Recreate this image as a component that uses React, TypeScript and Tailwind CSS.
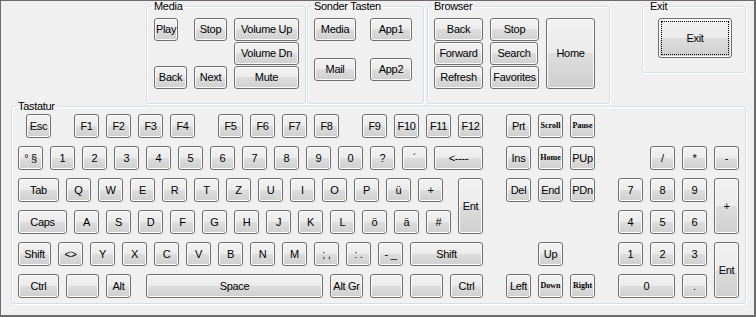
import clsx from 'clsx'
import type { ReactNode } from 'react'

const btnBase =
  'flex items-center justify-center overflow-hidden whitespace-nowrap rounded-[3px] border border-[#707070] bg-[linear-gradient(#f2f2f2,#ebebeb_50%,#dddddd_50%,#cfcfcf)] shadow-[inset_0_0_0_1px_#fbfbfb] text-black leading-none'

function Btn({ children, className, small }: { children?: ReactNode; className?: string; small?: boolean }) {
  return (
    <button
      className={clsx(
        btnBase,
        small ? "font-['Liberation_Serif',serif] text-[8px] font-bold" : 'tracking-[-0.3px]',
        className
      )}
    >
      {children}
    </button>
  )
}

function GroupBox({ title, className, children }: { title: string; className?: string; children?: ReactNode }) {
  return (
    <fieldset
      className={clsx(
        'shrink-0 rounded-[3px] border border-[#d5dfe5] shadow-[inset_1px_1px_0_#fff,1px_1px_0_#fff]',
        className
      )}
    >
      <legend className="-ml-[2px] px-[2px] text-[11px] leading-[11px] tracking-[-0.3px]">{title}</legend>
      {children}
    </fieldset>
  )
}

type KeyDef = [string, string, boolean?]

// grid: 1px columns with 7px gap -> every column is 8px apart, starting at x=18
const keys: KeyDef[] = [
  // row 1
  ['Esc', 'row-start-1 col-start-2 col-span-4'],
  ['F1', 'row-start-1 col-start-8 col-span-4'],
  ['F2', 'row-start-1 col-start-12 col-span-4'],
  ['F3', 'row-start-1 col-start-16 col-span-4'],
  ['F4', 'row-start-1 col-start-20 col-span-4'],
  ['F5', 'row-start-1 col-start-26 col-span-4'],
  ['F6', 'row-start-1 col-start-30 col-span-4'],
  ['F7', 'row-start-1 col-start-34 col-span-4'],
  ['F8', 'row-start-1 col-start-38 col-span-4'],
  ['F9', 'row-start-1 col-start-44 col-span-4'],
  ['F10', 'row-start-1 col-start-48 col-span-4'],
  ['F11', 'row-start-1 col-start-52 col-span-4'],
  ['F12', 'row-start-1 col-start-56 col-span-4'],
  ['Prt', 'row-start-1 col-start-62 col-span-4'],
  ['Scroll', 'row-start-1 col-start-66 col-span-4', true],
  ['Pause', 'row-start-1 col-start-70 col-span-4', true],
  // row 2
  ['° §', 'row-start-2 col-start-1 col-span-4'],
  ['1', 'row-start-2 col-start-5 col-span-4'],
  ['2', 'row-start-2 col-start-9 col-span-4'],
  ['3', 'row-start-2 col-start-13 col-span-4'],
  ['4', 'row-start-2 col-start-17 col-span-4'],
  ['5', 'row-start-2 col-start-21 col-span-4'],
  ['6', 'row-start-2 col-start-25 col-span-4'],
  ['7', 'row-start-2 col-start-29 col-span-4'],
  ['8', 'row-start-2 col-start-33 col-span-4'],
  ['9', 'row-start-2 col-start-37 col-span-4'],
  ['0', 'row-start-2 col-start-41 col-span-4'],
  ['?', 'row-start-2 col-start-45 col-span-4'],
  ['´', 'row-start-2 col-start-49 col-span-4'],
  ['<----', 'row-start-2 col-start-53 col-span-7'],
  ['Ins', 'row-start-2 col-start-62 col-span-4'],
  ['Home', 'row-start-2 col-start-66 col-span-4', true],
  ['PUp', 'row-start-2 col-start-70 col-span-4'],
  ['/', 'row-start-2 col-start-80 col-span-4'],
  ['*', 'row-start-2 col-start-84 col-span-4'],
  ['-', 'row-start-2 col-start-88 col-span-4'],
  // row 3
  ['Tab', 'row-start-3 col-start-1 col-span-6'],
  ['Q', 'row-start-3 col-start-7 col-span-4'],
  ['W', 'row-start-3 col-start-11 col-span-4'],
  ['E', 'row-start-3 col-start-15 col-span-4'],
  ['R', 'row-start-3 col-start-19 col-span-4'],
  ['T', 'row-start-3 col-start-23 col-span-4'],
  ['Z', 'row-start-3 col-start-27 col-span-4'],
  ['U', 'row-start-3 col-start-31 col-span-4'],
  ['I', 'row-start-3 col-start-35 col-span-4'],
  ['O', 'row-start-3 col-start-39 col-span-4'],
  ['P', 'row-start-3 col-start-43 col-span-4'],
  ['ü', 'row-start-3 col-start-47 col-span-4'],
  ['+', 'row-start-3 col-start-51 col-span-4'],
  ['Ent', 'row-start-3 row-span-2 col-start-56 col-span-4'],
  ['Del', 'row-start-3 col-start-62 col-span-4'],
  ['End', 'row-start-3 col-start-66 col-span-4'],
  ['PDn', 'row-start-3 col-start-70 col-span-4'],
  ['7', 'row-start-3 col-start-76 col-span-4'],
  ['8', 'row-start-3 col-start-80 col-span-4'],
  ['9', 'row-start-3 col-start-84 col-span-4'],
  ['+', 'row-start-3 row-span-2 col-start-88 col-span-4'],
  // row 4
  ['Caps', 'row-start-4 col-start-1 col-span-7'],
  ['A', 'row-start-4 col-start-8 col-span-4'],
  ['S', 'row-start-4 col-start-12 col-span-4'],
  ['D', 'row-start-4 col-start-16 col-span-4'],
  ['F', 'row-start-4 col-start-20 col-span-4'],
  ['G', 'row-start-4 col-start-24 col-span-4'],
  ['H', 'row-start-4 col-start-28 col-span-4'],
  ['J', 'row-start-4 col-start-32 col-span-4'],
  ['K', 'row-start-4 col-start-36 col-span-4'],
  ['L', 'row-start-4 col-start-40 col-span-4'],
  ['ö', 'row-start-4 col-start-44 col-span-4'],
  ['ä', 'row-start-4 col-start-48 col-span-4'],
  ['#', 'row-start-4 col-start-52 col-span-4'],
  ['4', 'row-start-4 col-start-76 col-span-4'],
  ['5', 'row-start-4 col-start-80 col-span-4'],
  ['6', 'row-start-4 col-start-84 col-span-4'],
  // row 5
  ['Shift', 'row-start-5 col-start-1 col-span-5'],
  ['<>', 'row-start-5 col-start-6 col-span-4'],
  ['Y', 'row-start-5 col-start-10 col-span-4'],
  ['X', 'row-start-5 col-start-14 col-span-4'],
  ['C', 'row-start-5 col-start-18 col-span-4'],
  ['V', 'row-start-5 col-start-22 col-span-4'],
  ['B', 'row-start-5 col-start-26 col-span-4'],
  ['N', 'row-start-5 col-start-30 col-span-4'],
  ['M', 'row-start-5 col-start-34 col-span-4'],
  ['; ,', 'row-start-5 col-start-38 col-span-4'],
  [': .', 'row-start-5 col-start-42 col-span-4'],
  ['- _', 'row-start-5 col-start-46 col-span-4'],
  ['Shift', 'row-start-5 col-start-50 col-span-10'],
  ['Up', 'row-start-5 col-start-66 col-span-4'],
  ['1', 'row-start-5 col-start-76 col-span-4'],
  ['2', 'row-start-5 col-start-80 col-span-4'],
  ['3', 'row-start-5 col-start-84 col-span-4'],
  ['Ent', 'row-start-5 row-span-2 col-start-88 col-span-4'],
  // row 6
  ['Ctrl', 'row-start-6 col-start-1 col-span-6'],
  ['', 'row-start-6 col-start-7 col-span-5'],
  ['Alt', 'row-start-6 col-start-12 col-span-4'],
  ['Space', 'row-start-6 col-start-17 col-span-23'],
  ['Alt Gr', 'row-start-6 col-start-40 col-span-5'],
  ['', 'row-start-6 col-start-45 col-span-5'],
  ['', 'row-start-6 col-start-50 col-span-5'],
  ['Ctrl', 'row-start-6 col-start-55 col-span-5'],
  ['Left', 'row-start-6 col-start-62 col-span-4'],
  ['Down', 'row-start-6 col-start-66 col-span-4', true],
  ['Right', 'row-start-6 col-start-70 col-span-4', true],
  ['0', 'row-start-6 col-start-76 col-span-8'],
  ['.', 'row-start-6 col-start-84 col-span-4'],
]

export default function App() {
  return (
    <div className="h-[317px] w-[756px] overflow-hidden border-t border-l border-r-2 border-b-2 border-[#6b6b6b] bg-[#f0f0f0] font-['Liberation_Sans',Arial,sans-serif] text-[11px] text-black">
      {/* top row of group boxes */}
      <div className="flex h-[103px] items-start">
        <GroupBox title="Media" className="ml-[145px] h-[103px] w-[160px] pl-[7px] pt-[6px]">
          <div className="flex gap-[7px]">
            <div className="flex h-[71px] w-[33px] flex-col items-start justify-between">
              <Btn className="h-[23px] w-[24px]">Play</Btn>
              <Btn className="h-[23px] w-[33px]">Back</Btn>
            </div>
            <div className="flex h-[71px] w-[33px] flex-col justify-between">
              <Btn className="h-[23px] w-[33px]">Stop</Btn>
              <Btn className="h-[23px] w-[33px]">Next</Btn>
            </div>
            <div className="flex flex-col gap-[1px]">
              <Btn className="h-[23px] w-[65px]">Volume Up</Btn>
              <Btn className="h-[23px] w-[65px]">Volume Dn</Btn>
              <Btn className="h-[23px] w-[65px]">Mute</Btn>
            </div>
          </div>
        </GroupBox>

        <GroupBox title="Sonder Tasten" className="ml-[1px] h-[103px] w-[117px] pl-[6px] pt-[6px]">
          <div className="grid grid-cols-[42px_42px] gap-x-[14px] gap-y-[17px]">
            <Btn className="h-[23px]">Media</Btn>
            <Btn className="h-[23px]">App1</Btn>
            <Btn className="h-[23px]">Mail</Btn>
            <Btn className="h-[23px]">App2</Btn>
          </div>
        </GroupBox>

        <GroupBox title="Browser" className="ml-[3px] h-[103px] w-[183px] pl-[6px] pt-[6px]">
          <div className="flex gap-[7px]">
            <div className="flex flex-col gap-[1px]">
              <Btn className="h-[23px] w-[49px]">Back</Btn>
              <Btn className="h-[23px] w-[49px]">Forward</Btn>
              <Btn className="h-[23px] w-[49px]">Refresh</Btn>
            </div>
            <div className="flex flex-col gap-[1px]">
              <Btn className="h-[23px] w-[49px]">Stop</Btn>
              <Btn className="h-[23px] w-[48px]">Search</Btn>
              <Btn className="h-[23px] w-[49px]">Favorites</Btn>
            </div>
            <Btn className="h-[71px] w-[49px]">Home</Btn>
          </div>
        </GroupBox>

        <GroupBox title="Exit" className="ml-[32px] h-[72px] w-[104px] pl-[7px] pt-[6px]">
          <button className={clsx(btnBase, 'relative ml-[8px] h-[40px] w-[74px] border-[#3c3c3c] tracking-[-0.3px]')}>
            Exit
            <span className="absolute inset-[2px] border border-dotted border-black" />
          </button>
        </GroupBox>
      </div>

      {/* keyboard */}
      <GroupBox title="Tastatur" className="-mt-[3px] ml-[10px] h-[203px] w-[735px] pl-[6px] pt-[2px]">
        <div className="grid auto-rows-[24px] grid-cols-[repeat(91,1px)] gap-x-[7px] gap-y-[8px]">
          {keys.map(([label, pos, small], i) => (
            <Btn key={i} className={pos} small={small}>
              {label}
            </Btn>
          ))}
        </div>
      </GroupBox>
    </div>
  )
}
